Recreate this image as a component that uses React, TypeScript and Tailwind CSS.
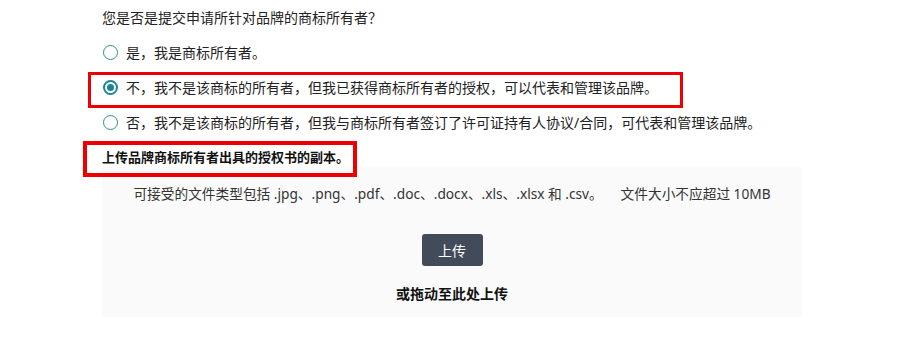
import { useState } from 'react'

const options = [
  '是，我是商标所有者。',
  '不，我不是该商标的所有者，但我已获得商标所有者的授权，可以代表和管理该品牌。',
  '否，我不是该商标的所有者，但我与商标所有者签订了许可证持有人协议/合同，可代表和管理该品牌。',
]

function Radio({ checked }: { checked: boolean }) {
  return checked ? (
    <span className="w-[15px] h-[15px] rounded-full border-2 border-[#1a8596] flex items-center justify-center shrink-0 bg-white">
      <span className="block w-[7px] h-[7px] rounded-full bg-[#1a8596]" />
    </span>
  ) : (
    <span className="block w-[15px] h-[15px] rounded-full border-[1.5px] border-[#2f8c98] shrink-0 bg-white" />
  )
}

export default function App() {
  const [selected, setSelected] = useState(1)

  return (
    <div
      className="w-[900px] h-[342px] bg-white pl-[102px] text-[#222] text-[14px]"
      style={{ fontFamily: '"Noto Sans", "Noto Sans CJK SC", sans-serif' }}
    >
      <div className="h-[35px] pt-[0.5px] flex items-center">您是否是提交申请所针对品牌的商标所有者？</div>

      {options.map((label, i) => (
        <div
          key={i}
          onClick={() => setSelected(i)}
          className="relative h-[35px] flex items-center cursor-pointer"
        >
          <span className="ml-[1px] flex"><Radio checked={selected === i} /></span>
          <span className="ml-[8px]">{label}</span>
          {i === 1 && (
            <span className="absolute left-[-14px] top-[1.5px] w-[595px] h-[36px] border-[3px] border-[#ee0000] pointer-events-none" />
          )}
        </div>
      ))}

      <div className="relative mt-[9px] h-[18px] flex items-center text-[13px] font-bold text-[#111]">
        上传品牌商标所有者出具的授权书的副本。
        <span className="absolute left-[-19px] top-[-8px] w-[274px] h-[36px] border-[4px] border-[#ee0000] pointer-events-none" />
      </div>

      <div className="w-[700px] h-[150px] bg-[#fafafa] pt-[17px] flex flex-col items-center">
        <div className="h-[20px] flex items-center text-[13.7px] text-[#333] whitespace-pre">
          可接受的文件类型包括 .jpg、.png、.pdf、.doc、.docx、.xls、.xlsx 和 .csv。{'     '}文件大小不应超过 10MB
        </div>
        <button
          type="button"
          className="mt-[30px] w-[61px] h-[32px] rounded-[3px] bg-[#414b5a] text-white text-[14px]"
        >
          上传
        </button>
        <div className="mt-[17px] h-[20px] flex items-center font-bold text-[14px] text-[#111]">或拖动至此处上传</div>
      </div>
    </div>
  )
}
